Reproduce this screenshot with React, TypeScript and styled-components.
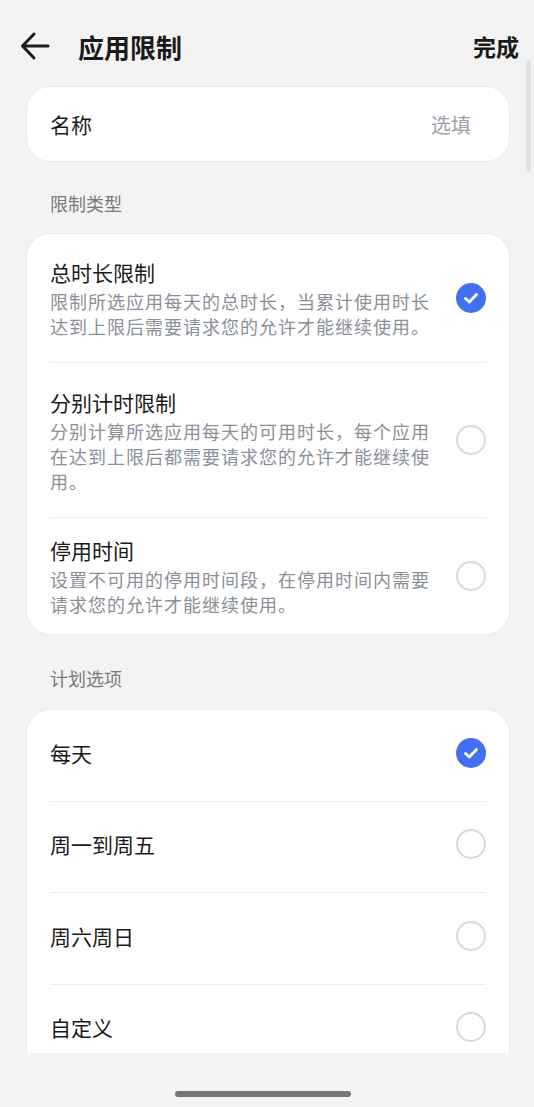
import React from "react";
import styled, { createGlobalStyle } from "styled-components";

const Global = createGlobalStyle`
  html, body { margin: 0; padding: 0; background: #f3f3f3; }
  body { font-family: "Noto Sans CJK SC", "Noto Sans", sans-serif; -webkit-font-smoothing: antialiased; }
  * { box-sizing: border-box; }
`;

const Page = styled.div`
  width: 534px;
  height: 1107px;
  background: #f3f3f3;
  display: flex;
  flex-direction: column;
  position: relative;
  overflow: hidden;
`;

const Header = styled.div`
  height: 86px;
  flex: none;
  display: flex;
  align-items: center;
  padding: 6px 15px 0 18px;
`;

const BackButton = styled.div`
  width: 34px;
  height: 34px;
  display: flex;
  align-items: center;
  justify-content: center;
  margin-right: 26px;
`;

const Title = styled.div`
  flex: 1;
  font-size: 26px;
  font-weight: 700;
  color: #1a1a1a;
`;

const Done = styled.div`
  font-size: 23px;
  font-weight: 700;
  color: #1a1a1a;
`;

const Scroll = styled.div`
  height: 967px;
  flex: none;
  overflow: hidden;
  padding: 0 24px 0 26px;
  display: flex;
  flex-direction: column;
`;

const Card = styled.div`
  background: #fff;
  border-radius: 24px;
  border: 1px solid #ebebeb;
  padding: 0 23px 0 23px;
  display: flex;
  flex-direction: column;
  flex: none;
`;

const NameRow = styled.div`
  height: 74px;
  display: flex;
  align-items: center;
  justify-content: space-between;
  padding-right: 15px;
`;

const Label = styled.div`
  font-size: 21px;
  color: #1c1c1c;
`;

const Placeholder = styled.div`
  font-size: 20px;
  color: #9aa0a9;
`;

const SectionTitle = styled.div<{ $h: number; $pt: number }>`
  font-size: 18px;
  color: #7a7a7a;
  height: ${(p) => p.$h}px;
  display: flex;
  align-items: center;
  padding-left: 24px;
  padding-top: ${(p) => p.$pt}px;
  flex: none;
`;

const OptionRow = styled.div<{ $h: number; $last?: boolean; $pb?: number }>`
  height: ${(p) => p.$h}px;
  display: flex;
  align-items: center;
  padding-bottom: ${(p) => p.$pb ?? 0}px;
  border-bottom: ${(p) => (p.$last ? "none" : "1.5px solid #ececec")};
  flex: none;
`;

const OptionText = styled.div`
  flex: 1;
  display: flex;
  flex-direction: column;
  padding-right: 15px;
`;

const OptionTitle = styled.div`
  font-size: 21px;
  font-weight: 400;
  color: #1a1a1a;
  line-height: 30px;
`;

const OptionDesc = styled.div`
  font-size: 18px;
  letter-spacing: 1px;
  color: #8a8f98;
  line-height: 25px;
  margin-top: 2px;
`;

const Ring = styled.div`
  width: 30px;
  height: 30px;
  border-radius: 50%;
  border: 2px solid #d8d8dd;
  flex: none;
`;

const CheckCircle = styled.div`
  width: 30px;
  height: 30px;
  border-radius: 50%;
  background: #4170f2;
  display: flex;
  align-items: center;
  justify-content: center;
  flex: none;
`;

const ScrollBar = styled.div`
  position: absolute;
  right: 3px;
  top: 60px;
  width: 5px;
  height: 112px;
  border-radius: 3px;
  background: #e2e2e2;
`;

const HomeBar = styled.div`
  position: absolute;
  left: 175px;
  bottom: 10px;
  width: 176px;
  height: 6px;
  border-radius: 3px;
  background: #777;
`;

const Check = () => (
  <CheckCircle>
    <svg width="18" height="18" viewBox="0 0 18 18">
      <path d="M3.5 9.5 L7.3 13 L14.5 5.5" fill="none" stroke="#fff" strokeWidth="2.8" strokeLinecap="round" strokeLinejoin="round" />
    </svg>
  </CheckCircle>
);

const Mark = ({ on }: { on: boolean }) => (on ? <Check /> : <Ring />);

const types = [
  { t: "总时长限制", d: "限制所选应用每天的总时长，当累计使用时长达到上限后需要请求您的允许才能继续使用。", on: true, h: 129 },
  { t: "分别计时限制", d: "分别计算所选应用每天的可用时长，每个应用在达到上限后都需要请求您的允许才能继续使用。", on: false, h: 155 },
  { t: "停用时间", d: "设置不可用的停用时间段，在停用时间内需要请求您的允许才能继续使用。", on: false, h: 116 },
];

const plans = [
  { t: "每天", on: true },
  { t: "周一到周五", on: false },
  { t: "周六周日", on: false },
  { t: "自定义", on: false },
];

export default function App() {
  return (
    <Page>
      <Global />
      <Header>
        <BackButton>
          <svg width="32" height="30" viewBox="0 0 32 30">
            <path d="M29 15 H4 M15 3 L3.5 15 L15 27" fill="none" stroke="#1c1c1c" strokeWidth="3" strokeLinecap="round" strokeLinejoin="round" />
          </svg>
        </BackButton>
        <Title>应用限制</Title>
        <Done>完成</Done>
      </Header>
      <Scroll>
        <Card>
          <NameRow>
            <Label>名称</Label>
            <Placeholder>选填</Placeholder>
          </NameRow>
        </Card>
        <SectionTitle $h={71} $pt={10}>限制类型</SectionTitle>
        <Card>
          {types.map((it, i) => (
            <OptionRow key={it.t} $h={it.h} $last={i === types.length - 1}>
              <OptionText>
                <OptionTitle>{it.t}</OptionTitle>
                <OptionDesc>{it.d}</OptionDesc>
              </OptionText>
              <Mark on={it.on} />
            </OptionRow>
          ))}
        </Card>
        <SectionTitle $h={74} $pt={12}>计划选项</SectionTitle>
        <Card>
          {plans.map((it) => (
            <OptionRow key={it.t} $h={91.5} $pb={5}>
              <OptionText>
                <OptionTitle>{it.t}</OptionTitle>
              </OptionText>
              <Mark on={it.on} />
            </OptionRow>
          ))}
        </Card>
      </Scroll>
      <ScrollBar />
      <HomeBar />
    </Page>
  );
}
